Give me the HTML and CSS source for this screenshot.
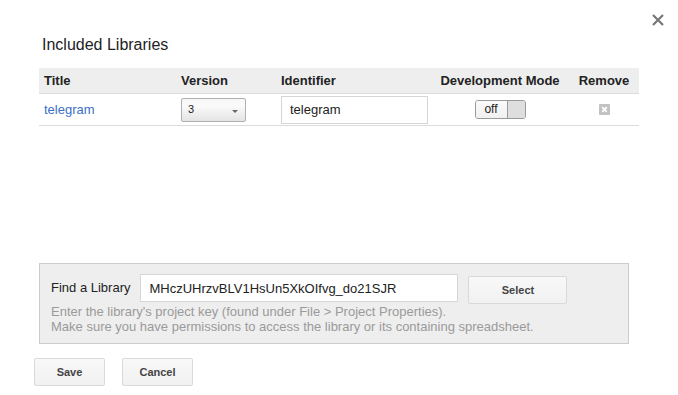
FILE: index.html
```html
<!DOCTYPE html>
<html lang="en">
<head>
<meta charset="utf-8">
<title>Included Libraries</title>
<link rel="stylesheet" href="styles.css">
</head>
<body>
<div class="dialog">
  <button class="close" aria-label="Close">
    <svg width="12" height="12" viewBox="0 0 12 12"><path d="M1 1 L11 11 M11 1 L1 11" stroke="#777" stroke-width="2.2" fill="none"/></svg>
  </button>
  <h1 class="title">Included Libraries</h1>
  <div class="libs">
    <div class="grid head">
      <div class="cell">Title</div>
      <div class="cell">Version</div>
      <div class="cell">Identifier</div>
      <div class="cell center">Development Mode</div>
      <div class="cell center remove-col">Remove</div>
    </div>
    <div class="grid row">
      <div class="cell"><a class="link" href="#">telegram</a></div>
      <div class="cell">
        <div class="select"><span class="sel-val">3</span><span class="arrow"></span></div>
      </div>
      <div class="cell"><input class="ident" type="text" value="telegram"></div>
      <div class="cell center">
        <div class="toggle"><span class="off">off</span><span class="knob"></span></div>
      </div>
      <div class="cell center remove-col">
        <svg width="11" height="11" viewBox="0 0 11 11"><rect width="11" height="11" rx="1" fill="#c2c2c2"/><path d="M3.2 3.2 L7.8 7.8 M7.8 3.2 L3.2 7.8" stroke="#fff" stroke-width="1.8"/></svg>
      </div>
    </div>
  </div>
  <div class="find">
    <div class="find-row">
      <label class="find-label" for="key">Find a Library</label>
      <input id="key" class="key" type="text" value="MHczUHrzvBLV1HsUn5XkOIfvg_do21SJR">
      <button class="btn select-btn">Select</button>
    </div>
    <div class="help">
      <div>Enter the library's project key (found under File &gt; Project Properties).</div>
      <div>Make sure you have permissions to access the library or its containing spreadsheet.</div>
    </div>
  </div>
  <div class="actions">
    <button class="btn act">Save</button>
    <button class="btn act">Cancel</button>
  </div>
</div>
</body>
</html>
```

FILE: styles.css
```css
html, body {
  margin: 0;
  padding: 0;
  background: #fff;
}
body {
  font-family: "Liberation Sans", Arial, sans-serif;
  color: #222;
  width: 678px;
  height: 395px;
  overflow: hidden;
}
.dialog {
  position: relative;
  padding-top: 35px;
}
.close {
  position: absolute;
  top: 14px;
  left: 652px;
  width: 12px;
  height: 12px;
  padding: 0;
  border: 0;
  background: transparent;
  display: flex;
}
.title {
  margin: 0 0 0 42px;
  font-size: 16px;
  line-height: 20px;
  font-weight: normal;
  color: #222;
}
.libs {
  margin: 13px 0 0 39px;
  width: 600px;
  height: 195px;
}
.grid {
  display: grid;
  grid-template-columns: 137px 100px 160px 123px 80px;
  align-items: center;
}
.head {
  height: 25px;
  background: #eeeeee;
  border-bottom: 1px solid #dcdcdc;
  font-size: 13px;
  font-weight: bold;
  color: #222;
}
.row {
  height: 31px;
  border-bottom: 1px solid #dcdcdc;
  font-size: 13px;
}
.cell {
  padding-left: 5px;
  display: flex;
  align-items: center;
  white-space: nowrap;
}
.cell.center {
  justify-content: center;
}
.cell.remove-col {
  padding-left: 10px;
}
.link {
  color: #3b6fc6;
  text-decoration: none;
}
.select {
  box-sizing: border-box;
  width: 65px;
  height: 24px;
  border: 1px solid #b0b0b0;
  border-radius: 2px;
  background: linear-gradient(#f6f6f6, #fbfbfb 30%, #e4e4e4);
  display: flex;
  justify-content: space-between;
  align-items: flex-start;
  padding: 3px 7px 0 6px;
}
.sel-val {
  font-size: 11px;
  line-height: 14px;
  color: #222;
}
.arrow {
  width: 0;
  height: 0;
  margin-top: 8px;
  border-left: 3.5px solid transparent;
  border-right: 3.5px solid transparent;
  border-top: 3.5px solid #666;
}
.ident {
  box-sizing: border-box;
  width: 147px;
  height: 28px;
  margin: 0;
  border: 1px solid #d6d6d6;
  padding: 0 8px;
  font: 13px "Liberation Sans", Arial, sans-serif;
  color: #222;
  outline: none;
}
.toggle {
  box-sizing: border-box;
  width: 51px;
  height: 19px;
  border: 1px solid #9a9a9a;
  border-radius: 3px;
  display: flex;
  overflow: hidden;
}
.off {
  width: 31px;
  text-align: center;
  font-size: 12px;
  line-height: 17px;
  background: linear-gradient(#fbfbfb, #f0f0f0);
  color: #222;
}
.knob {
  flex: 1;
  border-left: 1px solid #9a9a9a;
  background: #dedede;
}
.find {
  box-sizing: border-box;
  margin-left: 39px;
  width: 590px;
  height: 81px;
  background: #eeeeee;
  border: 1px solid #cccccc;
  padding: 10px 11px 9px 11px;
}
.find-row {
  display: flex;
  align-items: flex-start;
  height: 30px;
}
.find-label {
  font-size: 13px;
  line-height: 28px;
  color: #222;
  margin-right: 10px;
}
.key {
  box-sizing: border-box;
  width: 318px;
  height: 28px;
  margin: 0 10px 0 0;
  border: 1px solid #d6d6d6;
  padding: 0 8px;
  font: 13px "Liberation Sans", Arial, sans-serif;
  color: #222;
  outline: none;
}
.btn {
  box-sizing: border-box;
  height: 28px;
  border: 1px solid #d9d9d9;
  border-radius: 2px;
  background: linear-gradient(#f8f8f8, #f1f1f1);
  font: bold 11px "Liberation Sans", Arial, sans-serif;
  color: #444;
  padding: 0;
}
.select-btn {
  width: 99px;
  margin-top: 2px;
}
.help {
  font-size: 13px;
  line-height: 15px;
  color: #9a9a9a;
}
.actions {
  margin: 14px 0 0 34px;
  display: flex;
  gap: 17px;
}
.act {
  width: 71px;
}
```
